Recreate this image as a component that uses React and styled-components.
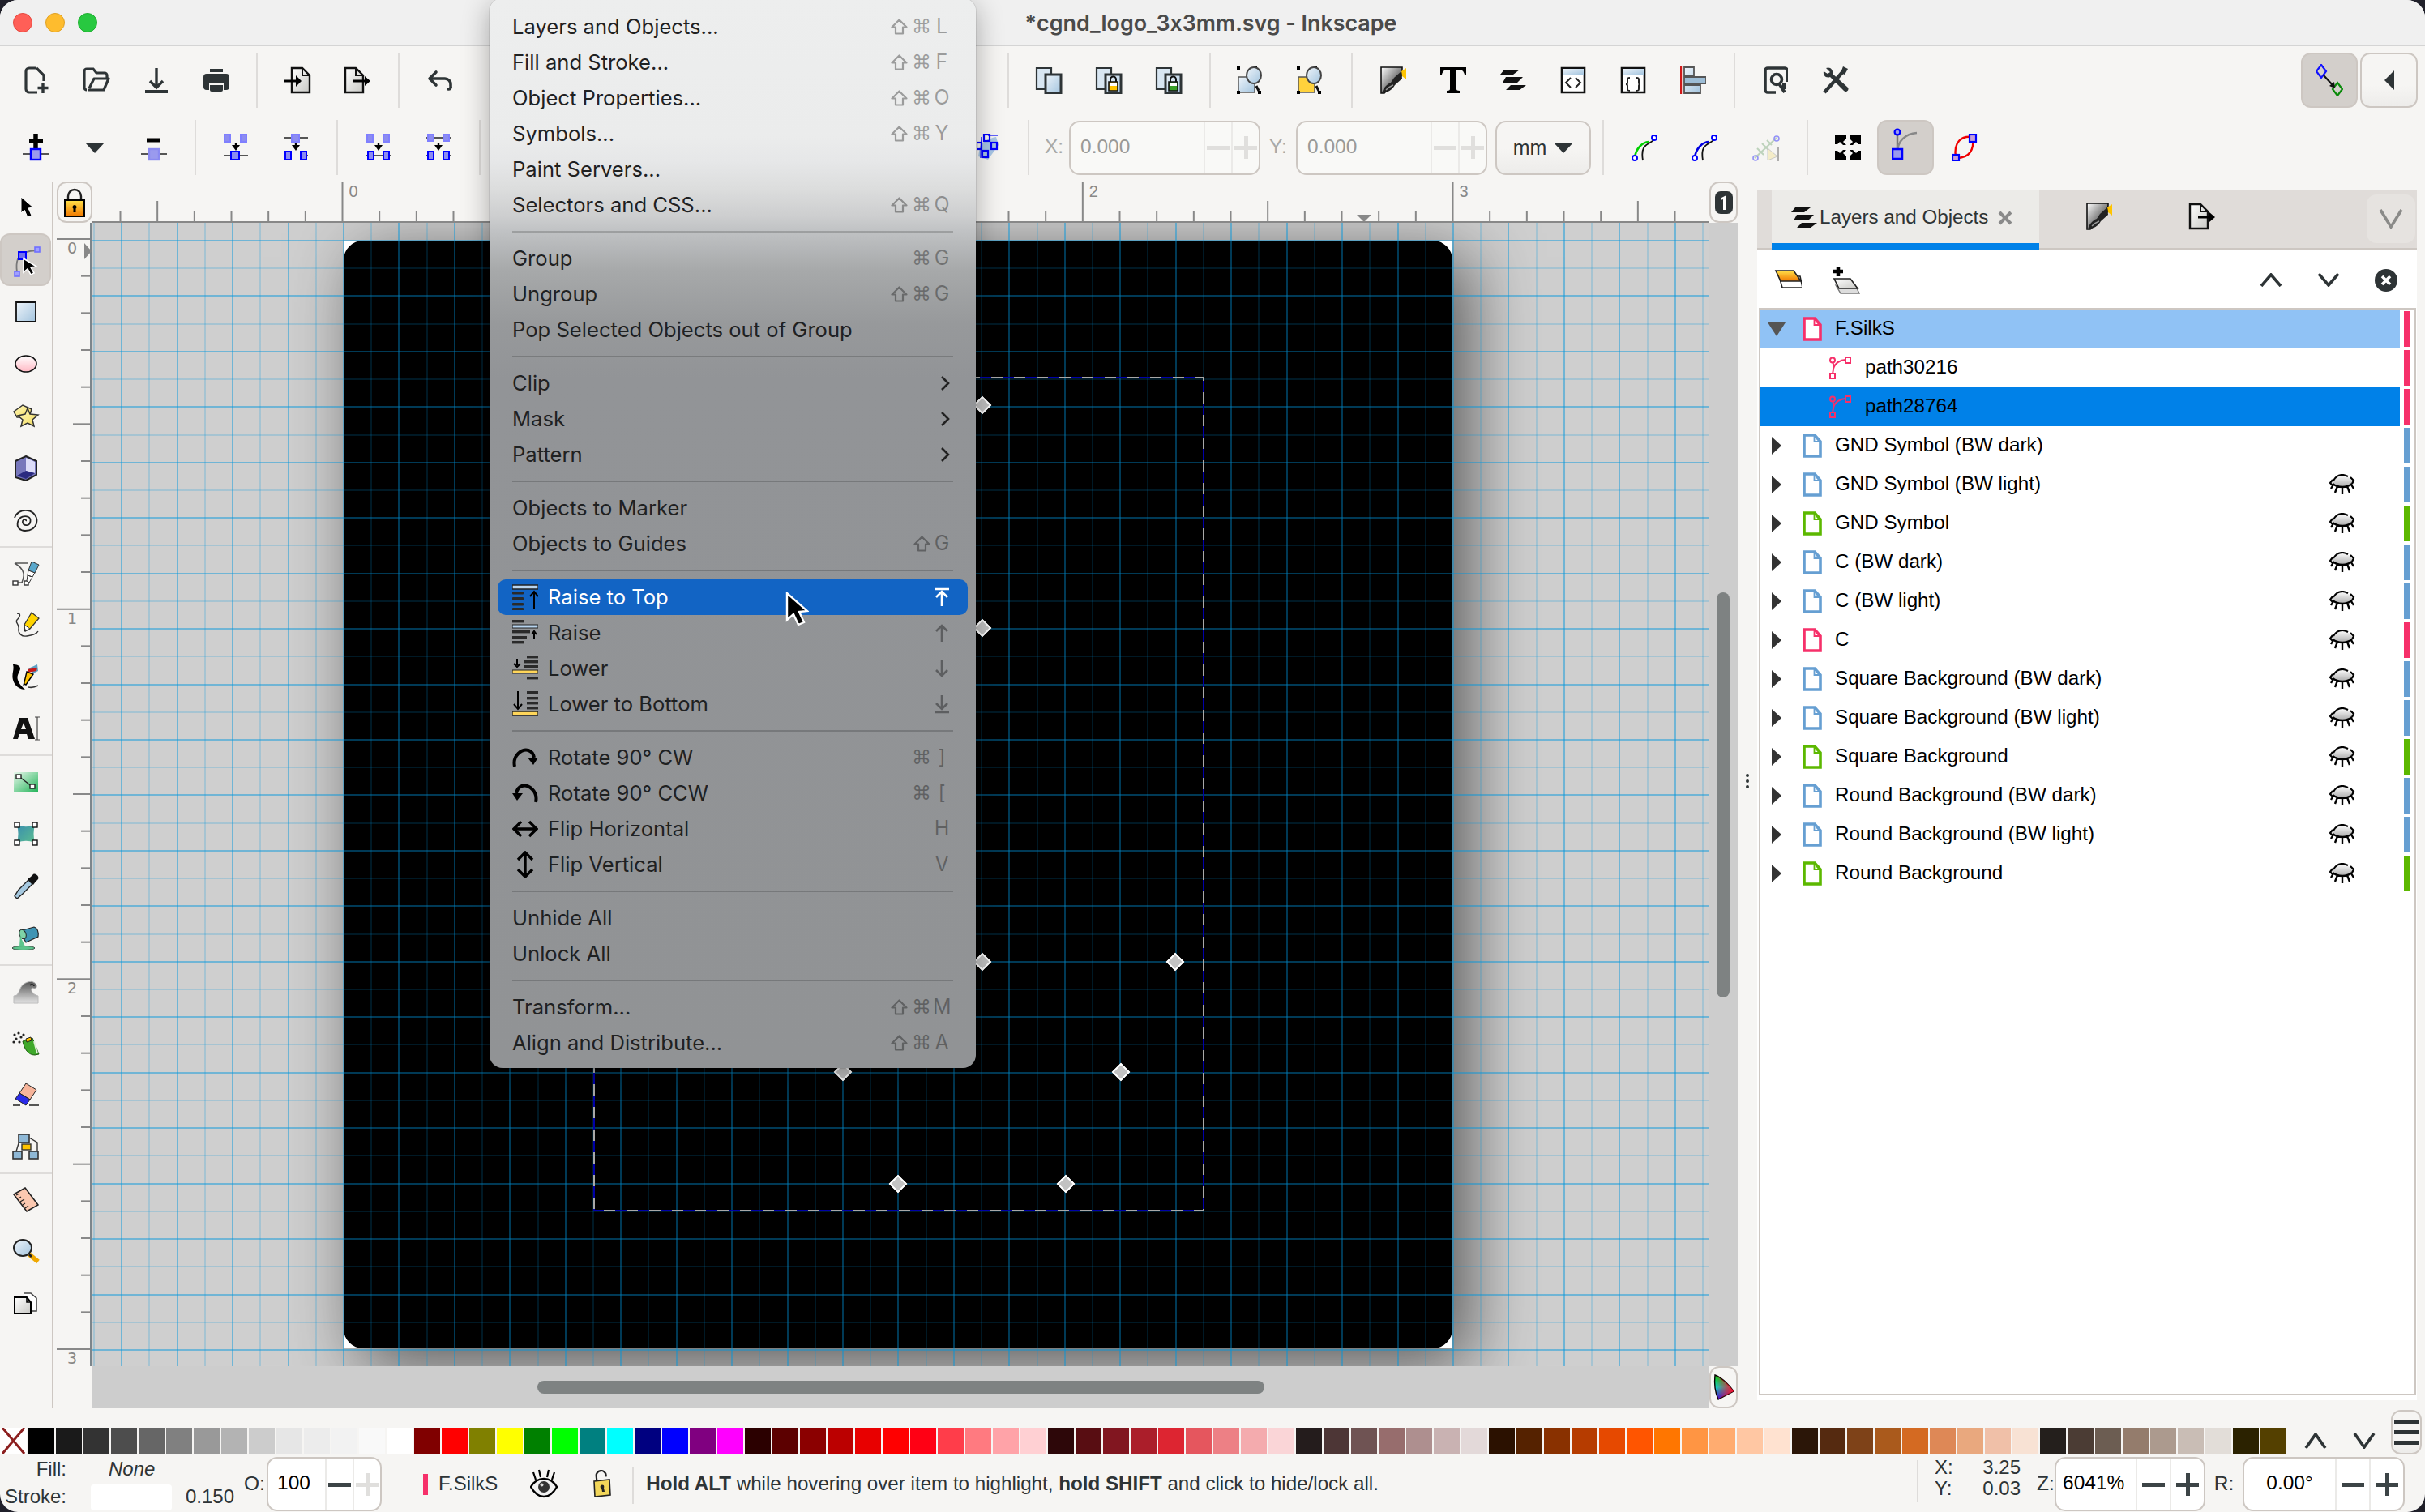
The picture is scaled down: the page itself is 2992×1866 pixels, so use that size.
import React from "react";
import styled, { createGlobalStyle } from "styled-components";

const GlobalStyle = createGlobalStyle`
  html, body {
    margin: 0;
    padding: 0;
    background: #20202a;
  }
  body {
    width: 2992px;
    height: 1866px;
    overflow: hidden;
    font-family: "Liberation Sans", Arial, sans-serif;
  }
  * { box-sizing: border-box; }
`;

const gridLines = (dir, phase, color, period = 68.45) =>
  `repeating-linear-gradient(${dir}, transparent 0 ${phase}px, ${color} ${phase}px ${phase + 2}px, transparent ${phase + 2}px ${period}px)`;

const Window = styled.div`
  position: relative;
  width: 2992px;
  height: 1866px;
  background: #f6f5f3;
  border-radius: 22px;
  overflow: hidden;
  display: flex;
  flex-direction: column;
`;

const TitleBar = styled.div`
  height: 57px;
  flex: none;
  background: #f0f0f0;
  border-bottom: 2px solid #d4d4d4;
  display: flex;
  align-items: center;
  padding-left: 16px;
  gap: 16px;
  position: relative;
`;

const Light = styled.span`
  width: 24px;
  height: 24px;
  border-radius: 50%;
  background: ${(p) => p.$color};
  border: 1px solid ${(p) => p.$edge};
`;

const TitleText = styled.div`
  flex: 1;
  text-align: center;
  margin-left: -140px;
  font-family: Inter, sans-serif;
  font-feature-settings: "calt" 0;
  font-weight: 600;
  font-size: 26.85px;
  color: #4a4a4a;
`;

const Toolbar = styled.div`
  height: ${(p) => p.$h}px;
  flex: none;
  display: flex;
  align-items: center;
  padding-left: ${(p) => p.$pl}px;
  padding-right: 9px;
`;

const ToolBtn = styled.div`
  width: ${(p) => p.$w || 74}px;
  height: 68px;
  flex: none;
  display: flex;
  align-items: center;
  justify-content: center;
  border-radius: 12px;
  background: ${(p) => (p.$on ? "#d3cfcb" : "transparent")};
  border: ${(p) => (p.$on ? "2px solid #cdc7c2" : "none")};
`;

const RaisedBtn = styled(ToolBtn)`
  background: linear-gradient(#f6f5f3 60%, #edecea);
  border: 2px solid #cdc7c2;
  margin-left: 3px;
`;

const SepBlock = styled.div`
  width: ${(p) => p.$w || 28}px;
  height: 68px;
  flex: none;
  display: flex;
  justify-content: center;
  &::after {
    content: "";
    width: 2px;
    background: #dedcda;
  }
`;

const Gap = styled.div`
  width: ${(p) => p.$w}px;
  flex: none;
`;

const Push = styled.div`
  flex: 1;
`;

const SpinLabel = styled.span`
  flex: none;
  width: ${(p) => p.$w}px;
  text-align: center;
  font-size: 24.5px;
  padding-bottom: 2px;
  color: ${(p) => (p.$dim ? "#a9a9a7" : "#2e3436")};
`;

const Spin = styled.div`
  width: ${(p) => p.$w}px;
  height: 67px;
  flex: none;
  display: flex;
  align-items: stretch;
  background: ${(p) => (p.$dim ? "#f9f9f7" : "#fff")};
  border: 2px solid #cdc7c2;
  border-radius: 13px;
  overflow: hidden;
`;

const SpinValue = styled.div`
  flex: 1;
  display: flex;
  align-items: center;
  justify-content: ${(p) => p.$align || "flex-start"};
  padding-left: ${(p) => p.$pl || 0}px;
  padding-bottom: 3px;
  font-size: 24.5px;
  color: ${(p) => (p.$dim ? "#9a9a98" : "#000")};
`;

const Stepper = styled.div`
  width: ${(p) => p.$w || 34}px;
  flex: none;
  position: relative;
  border-left: 2px solid #ebeae8;
  &::before {
    content: "";
    position: absolute;
    left: 50%;
    top: 50%;
    width: 28px;
    height: 5px;
    margin: -2px 0 0 -14px;
    background: ${(p) => p.$color};
  }
  &::after {
    content: "";
    position: absolute;
    left: 50%;
    top: 50%;
    width: 5px;
    height: 28px;
    margin: -14px 0 0 -2px;
    background: ${(p) => (p.$plus ? p.$color : "transparent")};
  }
`;

const UnitBtn = styled.div`
  width: 118px;
  height: 67px;
  flex: none;
  margin-left: 10px;
  border: 2px solid #cdc7c2;
  border-radius: 13px;
  background: linear-gradient(#f6f5f3 50%, #edecea);
  display: flex;
  align-items: center;
  justify-content: center;
  gap: 9px;
  font-size: 25px;
  color: #2e3436;
`;

const Workspace = styled.div`
  height: 1514px;
  flex: none;
  display: flex;
  align-items: flex-start;
`;

const ToolColumn = styled.div`
  width: 66px;
  height: 1514px;
  flex: none;
  border-right: 2px solid #cdc7c2;
  display: flex;
  flex-direction: column;
`;

const ToolItem = styled.div`
  height: ${(p) => p.$h}px;
  flex: none;
  display: flex;
  align-items: center;
  justify-content: center;
  border-radius: 12px;
  margin-right: 1px;
  background: ${(p) => (p.$on ? "#d3cfcb" : "transparent")};
  border: ${(p) => (p.$on ? "2px solid #cdc7c2" : "none")};
`;

const ToolSep = styled.div`
  height: 2px;
  flex: none;
  background: #dedcda;
`;

const CanvasArea = styled.div`
  width: 2078px;
  height: 1514px;
  flex: none;
  display: grid;
  grid-template-columns: 48px 1995px 35px;
  grid-template-rows: 51px 1411px 52px;
`;

const LockBtn = styled.div`
  margin-left: 4px;
  border: 2px solid #cdc7c2;
  border-radius: 12px;
  display: flex;
  align-items: center;
  justify-content: center;
  background: #f6f5f3;
`;

const DeskBtn = styled.div`
  background: #f6f5f3;
  border: 2px solid #cdc7c2;
  border-radius: 12px;
  display: flex;
  align-items: center;
  justify-content: center;
`;

const RulerSvg = styled.svg`
  display: block;
  overflow: visible;
`;

const Canvas = styled.div`
  position: relative;
  overflow: hidden;
  background: #cfcfcf;
`;

const Page = styled.div`
  position: absolute;
  left: 310px;
  top: 22px;
  width: 1368px;
  height: 1367px;
  background: #fff;
  box-shadow: 20px 20px 80px rgba(0, 0, 0, 0.58);
  &::before {
    content: "";
    position: absolute;
    inset: 0;
    border-radius: 24px;
    background: #000;
  }
`;

const Grid = styled.div`
  position: absolute;
  inset: 0;
  background-image:
    ${gridLines("90deg", 35.2, "rgba(0,150,220,.46)")},
    ${gridLines("90deg", 0.95, "rgba(0,150,220,.2)")},
    ${gridLines("180deg", 21, "rgba(0,150,220,.46)")},
    ${gridLines("180deg", 55.2, "rgba(0,150,220,.2)")};
`;

const PageDim = styled.div`
  position: absolute;
  left: 310px;
  top: 22px;
  width: 1368px;
  height: 1367px;
  border-radius: 24px;
  background: rgba(0, 0, 0, 0.15);
`;

const Selection = styled.svg`
  position: absolute;
  left: 618px;
  top: 190px;
`;

const Node = styled.span`
  position: absolute;
  left: ${(p) => p.$x - 114 - 8}px;
  top: ${(p) => p.$y - 275 - 8}px;
  width: 16px;
  height: 16px;
  background: #c2c2c2;
  border: 2px solid #fff;
  transform: rotate(45deg);
`;

const VScrollTrack = styled.div`
  background: #cdcdcd;
  padding: 456px 10px 0 9px;
`;

const VThumb = styled.div`
  width: 16px;
  height: 500px;
  border-radius: 8px;
  background: #7e8282;
`;

const HScrollTrack = styled.div`
  background: #cdcdcd;
  padding: 18px 0 0 549px;
`;

const HThumb = styled.div`
  width: 897px;
  height: 16px;
  border-radius: 8px;
  background: #7e8282;
`;

const RulerFoot = styled.div`
  border-right: 0;
`;

const Handle = styled.div`
  width: 24px;
  height: 1504px;
  flex: none;
  display: flex;
  flex-direction: column;
  align-items: center;
  justify-content: center;
  gap: 3px;
  padding-bottom: 24px;
`;

const HandleDot = styled.span`
  width: 4px;
  height: 4px;
  border-radius: 50%;
  background: #2e3436;
  margin-left: -1px;
`;

const Panel = styled.div`
  width: 814px;
  height: 1494px;
  margin-top: 10px;
  flex: none;
  background: #fff;
  display: flex;
  flex-direction: column;
`;

const TabBar = styled.div`
  height: 74px;
  flex: none;
  background: #e0dcd9;
  border-bottom: 2px solid #cdc7c2;
  display: flex;
  padding-left: 18px;
  position: relative;
`;

const ActiveTab = styled.div`
  width: 330px;
  height: 74px;
  flex: none;
  background: #ecebe8;
  border-bottom: 8px solid #0081e8;
  display: flex;
  align-items: center;
  font-size: 24.2px;
  color: #2e3436;
  padding: 4px 0 0 24px;
`;

const TabLabel = styled.span`
  margin-left: 3px;
  padding-bottom: 2px;
`;

const TabIcon = styled.div`
  margin-left: ${(p) => p.$ml}px;
  height: 66px;
  display: flex;
  align-items: center;
`;

const TabClose = styled.span`
  margin-left: 12px;
  display: flex;
`;

const TabMenuBtn = styled.div`
  position: absolute;
  right: 2px;
  top: 6px;
  width: 60px;
  height: 60px;
  border-radius: 12px;
  background: #e6e3e0;
  display: flex;
  align-items: center;
  justify-content: center;
`;

const PanelBar = styled.div`
  height: 72px;
  flex: none;
  display: flex;
  align-items: center;
  padding: 3px 24px 0 21px;
  gap: 38px;
`;

const PanelActions = styled.div`
  margin-left: auto;
  display: flex;
  align-items: center;
  gap: 43px;
`;

const LayerBox = styled.div`
  flex: none;
  height: 1342px;
  margin: 0 1px 0 2px;
  border: 2px solid #cdc7c2;
  display: flex;
  flex-direction: column;
`;

const LayerRow = styled.div`
  height: 48px;
  flex: none;
  display: flex;
  align-items: stretch;
`;

const LayerMain = styled.div`
  width: 789px;
  flex: none;
  display: flex;
  align-items: center;
  padding-right: 55px;
  background: ${(p) => p.$bg || "transparent"};
  font-size: 24.2px;
  color: #000;
`;

const Expander = styled.span`
  width: 40px;
  flex: none;
  display: flex;
  justify-content: center;
`;

const LayerIconWrap = styled.span`
  width: ${(p) => p.$w}px;
  margin: 0 ${(p) => p.$mr}px 0 ${(p) => p.$ml}px;
  flex: none;
  display: flex;
`;

const LayerName = styled.span`
  flex: 1;
  white-space: nowrap;
  padding-bottom: 3px;
`;

const LayerBar = styled.span`
  width: 8px;
  flex: none;
  margin: 2px 0 2px 5px;
  background: ${(p) => p.$color};
`;

const PaletteRow = styled.div`
  height: 56px;
  flex: none;
  display: flex;
  align-items: flex-end;
  position: relative;
`;

const Swatches = styled.div`
  display: flex;
  gap: 2px;
  height: 32px;
`;

const Swatch = styled.span`
  width: 32px;
  flex: none;
  background: ${(p) => p.$c};
`;

const NoSwatch = styled.span`
  width: 33px;
  flex: none;
  background: #fff;
  display: flex;
`;

const PaletteArrows = styled.div`
  width: 129px;
  height: 32px;
  flex: none;
  display: flex;
  align-items: center;
  justify-content: space-between;
  padding: 0 19px 0 22px;
`;

const MenuBtn = styled.div`
  width: 38px;
  height: 55px;
  flex: none;
  border: 2px solid #cdc7c2;
  border-radius: 12px;
  background: linear-gradient(#f6f5f3 70%, #ecebe9);
  display: flex;
  flex-direction: column;
  align-items: center;
  justify-content: center;
  gap: 8px;
  margin-bottom: -1px;
`;

const MenuBar = styled.span`
  width: 30px;
  height: 5px;
  background: #2e3436;
`;

const StatusBar = styled.div`
  flex: 1;
  display: flex;
  align-items: flex-start;
  padding-top: 4px;
  font-size: 24px;
  color: #2e3436;
`;

const FillGrid = styled.div`
  width: 299px;
  flex: none;
  display: grid;
  grid-template-columns: 82px 30px 100px 17px auto;
  grid-template-rows: 34px 34px;
  align-items: center;
  margin-top: -2px;
`;

const FillLabel = styled.span`
  text-align: right;
`;

const NoneText = styled.span`
  grid-column: 2 / 6;
  padding-left: 52px;
  font-style: italic;
`;

const StrokeSwatch = styled.span`
  height: 32px;
  margin-top: 2px;
  background: #fff;
  border-radius: 4px;
`;

const StatusOpacity = styled.div`
  display: flex;
  align-items: center;
  height: 67px;
`;

const LayerTag = styled.div`
  display: flex;
  align-items: center;
  height: 67px;
  margin-left: 51px;
  padding-bottom: 2px;
`;

const LayerDot = styled.span`
  width: 6px;
  height: 26px;
  background: #f6306a;
  margin: 2px 13px 0 0;
`;

const StatusIcon = styled.span`
  display: flex;
  margin-left: ${(p) => p.$ml}px;
`;

const StatusSep = styled.span`
  width: 2px;
  height: ${(p) => p.$h}px;
  flex: none;
  background: #dedcda;
  margin: ${(p) => p.$mt}px ${(p) => p.$mr}px 0 ${(p) => p.$ml}px;
`;

const Hint = styled.div`
  width: 1000px;
  flex: none;
  height: 67px;
  display: flex;
  align-items: center;
  padding-bottom: 2px;
  white-space: pre;
  font-size: 24.16px;
`;

const Coords = styled.div`
  display: grid;
  grid-template-columns: 60px 46px;
  grid-template-rows: 26px 26px;
  align-items: center;
  margin-right: 20px;
  line-height: 26px;
`;

const CoordValue = styled.span`
  text-align: right;
  white-space: nowrap;
  direction: rtl;
`;

const Menu = styled.div`
  position: absolute;
  left: 604px;
  top: -2px;
  width: 600px;
  height: 1320px;
  padding: 13px 0 9px;
  border-radius: 16px;
  background: linear-gradient(
    #edeeee 0,
    #ebecec 170px,
    #e6e7e8 202px,
    #dcdddd 235px,
    #cdcecf 269px,
    #c0c2c4 287px,
    #a7a9aa 335px,
    #97999b 402px,
    #929497 469px,
    #919395 100%
  );
  box-shadow: 0 8px 34px rgba(0, 0, 0, 0.32), 0 0 0 1px rgba(0, 0, 0, 0.08);
  font-family: Inter, sans-serif;
  font-size: 25.6px;
  color: #1f2122;
  z-index: 5;
`;

const MenuRow = styled.div`
  height: 44px;
  margin: 0 10px;
  padding: 0 21px 0 18px;
  display: flex;
  align-items: center;
  border-radius: 10px;
  background: ${(p) => (p.$active ? "#1264c4" : "transparent")};
  color: ${(p) => (p.$active ? "#fff" : "inherit")};
`;

const MenuIcon = styled.span`
  width: 32px;
  margin-right: 12px;
  flex: none;
  display: flex;
  color: #111;
`;

const MenuText = styled.span`
  flex: 1;
  white-space: nowrap;
  padding-bottom: 2px;
`;

const Keys = styled.span`
  display: flex;
  align-items: center;
  color: rgba(0, 0, 0, 0.34);
  font-size: 25px;
`;

const KeyCap = styled.span`
  width: ${(p) => p.$w}px;
  display: flex;
  justify-content: center;
  text-align: center;
  font-family: "DejaVu Sans", sans-serif;
  font-size: 24px;
`;

const KeyLetter = styled.span`
  width: 22px;
  text-align: center;
  padding-bottom: 2px;
`;

const MenuSep = styled.div`
  height: 22px;
  margin: 0 28px;
  display: flex;
  align-items: center;
  &::after {
    content: "";
    flex: 1;
    height: 2px;
    background: rgba(0, 0, 0, 0.18);
  }
`;

const Pointer = styled.svg`
  position: absolute;
  left: 968px;
  top: 730px;
  z-index: 6;
`;

/* shared gradients for the colour icons */
const Defs = () => (
  <svg width="0" height="0" style={{ position: "absolute" }}>
    <defs>
      <linearGradient id="gDoc" x1="0" y1="0" x2="1" y2="1">
        <stop offset="0" stopColor="#fff" />
        <stop offset="1" stopColor="#c8c8c4" />
      </linearGradient>
      <linearGradient id="gBlue" x1="0" y1="0" x2="1" y2="1">
        <stop offset="0" stopColor="#eef4fa" />
        <stop offset="1" stopColor="#a3c4de" />
      </linearGradient>
      <linearGradient id="gPink" x1="0" y1="0" x2="0" y2="1">
        <stop offset="0" stopColor="#fff" />
        <stop offset="1" stopColor="#ffb9c4" />
      </linearGradient>
      <linearGradient id="gYellow" x1="0" y1="0" x2="1" y2="1">
        <stop offset="0" stopColor="#fff8c0" />
        <stop offset="1" stopColor="#f3dc5a" />
      </linearGradient>
      <linearGradient id="gGold" x1="0" y1="0" x2="0" y2="1">
        <stop offset="0" stopColor="#ffe14a" />
        <stop offset="1" stopColor="#f07800" />
      </linearGradient>
      <linearGradient id="gGreen" x1="0" y1="0" x2="1" y2="1">
        <stop offset="0" stopColor="#e9f8ec" />
        <stop offset="1" stopColor="#25b45a" />
      </linearGradient>
      <linearGradient id="gTeal" x1="0" y1="0" x2="1" y2="1">
        <stop offset="0" stopColor="#3a8fae" />
        <stop offset="1" stopColor="#5bbd90" />
      </linearGradient>
      <linearGradient id="gBrush" x1="0" y1="0" x2="1" y2="1">
        <stop offset="0" stopColor="#fff" />
        <stop offset="1" stopColor="#111" />
      </linearGradient>
      <linearGradient id="gWave" x1="0" y1="0" x2="0" y2="1">
        <stop offset="0" stopColor="#555" />
        <stop offset="1" stopColor="#e4e4e4" />
      </linearGradient>
      <linearGradient id="gEye" x1="0" y1="0" x2="0" y2="1">
        <stop offset="0" stopColor="#fff" />
        <stop offset="1" stopColor="#aaa" />
      </linearGradient>
      <linearGradient id="gWheelV" x1="0" y1="0" x2="0" y2="1">
        <stop offset="0" stopColor="#00d000" />
        <stop offset="0.5" stopColor="#00e0d0" />
        <stop offset="1" stopColor="#2000ff" />
      </linearGradient>
      <linearGradient id="gWheelH" x1="0" y1="0" x2="1" y2="0">
        <stop offset="0" stopColor="#ff0000" stopOpacity="0" />
        <stop offset="1" stopColor="#ff1030" />
      </linearGradient>
    </defs>
  </svg>
);

const Ic = ({ w = 36, h = 36, vb, children }) => (
  <svg width={w} height={h} viewBox={vb || `0 0 ${w} ${h}`} fill="none">
    {children}
  </svg>
);

const INK = "#2e3436";
const NODE = "#0000ff";
const SOFT = "#7f7fff";

const NewIcon = () => (
  <Ic w={32} h={34}>
    <path d="M16 2H7a4 4 0 0 0-4 4v22a4 4 0 0 0 4 4h10M16 2l9 9v7" stroke={INK} strokeWidth="3.2" strokeLinejoin="round" />
    <path d="M24 20v13M17.5 26.5h13" stroke={INK} strokeWidth="3.4" />
  </Ic>
);
const OpenIcon = () => (
  <Ic w={34} h={32}>
    <path d="M5 28a3 3 0 0 1-3-3V5a3 3 0 0 1 3-3h8l4 5h10a3 3 0 0 1 3 3v3" stroke={INK} strokeWidth="3.2" />
    <path d="M6 28h20l6-14H14L8 26" stroke={INK} strokeWidth="3.2" strokeLinejoin="round" />
  </Ic>
);
const SaveIcon = () => (
  <Ic w={30} h={34}>
    <path d="M15 2v24M7 18l8 8 8-8" stroke={INK} strokeWidth="3.4" />
    <path d="M1 31h28" stroke={INK} strokeWidth="4" />
  </Ic>
);
const PrintIcon = () => (
  <Ic w={34} h={30}>
    <path d="M9 1h16v4H9zM5 7h24a4 4 0 0 1 4 4v12a4 4 0 0 1-4 4h-3v-8H8v8H5a4 4 0 0 1-4-4V11a4 4 0 0 1 4-4z" fill={INK} />
    <path d="M9 21h16v6a2 2 0 0 1-2 2H11a2 2 0 0 1-2-2z" fill={INK} />
  </Ic>
);
const ImportIcon = () => (
  <Ic w={34} h={34}>
    <path d="M10 2h13l9 9v21H10z" fill="url(#gDoc)" stroke="#111" strokeWidth="2.4" />
    <path d="M23 2v9h9" stroke="#111" strokeWidth="2" />
    <path d="M0 18h16" stroke="#000" strokeWidth="3" />
    <path d="M15 11l7 7-7 7z" fill="#000" />
  </Ic>
);
const ExportIcon = () => (
  <Ic w={34} h={34}>
    <path d="M2 2h13l9 9v21H2z" fill="url(#gDoc)" stroke="#111" strokeWidth="2.4" />
    <path d="M15 2v9h9" stroke="#111" strokeWidth="2" />
    <path d="M12 18h16" stroke="#000" strokeWidth="3" />
    <path d="M26 12l7 6-7 6z" fill="#000" />
  </Ic>
);
const UndoIcon = () => (
  <Ic w={32} h={26}>
    <path d="M11 3L3 11l8 8" stroke={INK} strokeWidth="3.6" strokeLinecap="round" strokeLinejoin="round" />
    <path d="M4 11h18a7 7 0 0 1 7 7v2a3 3 0 0 1-3 4" stroke={INK} strokeWidth="3.6" strokeLinecap="round" />
  </Ic>
);
const DuplicateIcon = ({ lock }) => (
  <Ic w={34} h={34}>
    <path d="M2 2h18v26H2z" fill="#d8e6f2" stroke={INK} strokeWidth="2.2" />
    <path d="M13 10h19v23H13z" fill="url(#gBlue)" stroke={INK} strokeWidth="3" />
    {lock === "gold" && <path d="M17 19h11v11H17z" fill="#ffc400" stroke="#111" strokeWidth="1.6" />}
    {lock === "green" && <path d="M17 19h11v11H17z" fill="#3aa02a" stroke="#111" strokeWidth="1.6" />}
    {lock && <path d="M19 19v-3a3.5 3.5 0 0 1 7 0v3" stroke="#111" strokeWidth="2" />}
    {lock && <path d="M18 20h9v4h-9z" fill="#fff" />}
  </Ic>
);
const ZoomSelIcon = ({ gold }) => (
  <Ic w={34} h={34}>
    <path d="M2 13h20v19H2z" fill={gold ? "#ffd23c" : "url(#gBlue)"} stroke="#555" strokeWidth="1.5" />
    <path d="M0 0h4v4H0zM26 30h4v4h-4zM0 30h4v4H0zM21 0h4v4h-4z" fill="#000" />
    <ellipse cx="21" cy="11" rx="9" ry="10" fill="url(#gBlue)" stroke="#444" strokeWidth="2" />
    <path d="M24 24l3 6" stroke="#111" strokeWidth="3" />
  </Ic>
);
const BrushIcon = () => (
  <Ic w={34} h={34}>
    <path d="M2 1h26v2L27 12 6 33H2z" fill="url(#gBrush)" stroke="#111" strokeWidth="1.6" />
    <path d="M27 6l6-4v14l-5-4z" fill="#ffc400" />
    <path d="M3 33c2-7 6-11 11-13l4-6 9-8 1 9-9 8c-3 6-9 9-16 10z" fill="#222" />
    <path d="M8 29c3-3 6-5 9-6" stroke="#999" strokeWidth="1.4" />
  </Ic>
);
const BigTIcon = () => (
  <Ic w={34} h={34}>
    <path d="M1 1h32v9h-2c-1-4-3-6-7-6h-3v24c0 1 1 2 4 2v3H9v-3c3 0 4-1 4-2V4h-3C6 4 4 6 3 10H1z" fill="#000" />
  </Ic>
);
const LayersIcon = () => (
  <Ic w={32} h={26}>
    <path d="M5 0h19l-8 6H0zM7 9h21l-7 7H3zM13 19h19l-8 6H7z" fill="#111" />
  </Ic>
);
const XmlIcon = ({ braces }) => (
  <Ic w={32} h={34}>
    <path d="M2 2h28v30H2z" fill="#fff" stroke="#111" strokeWidth="2.6" />
    <path d="M3 3h26v7H3z" fill="url(#gBlue)" />
    {!braces && <path d="M13 16l-6 6 6 6M19 16l6 6-6 6" stroke="#222" strokeWidth="2" transform="translate(0 -2)" />}
    {braces && (
      <path d="M12 14c-3 0-3 1-3 3v3c0 2-1 2-2 2 1 0 2 0 2 2v3c0 2 0 3 3 3M20 14c3 0 3 1 3 3v3c0 2 1 2 2 2-1 0-2 0-2 2v3c0 2 0 3-3 3" stroke="#222" strokeWidth="2" />
    )}
  </Ic>
);
const AlignIcon = () => (
  <Ic w={32} h={34}>
    <path d="M1 0v34" stroke="#d01818" strokeWidth="2.4" />
    <path d="M5 1h12v10H5zM5 23h20v10H5z" fill="url(#gBlue)" stroke="#555" strokeWidth="1.8" />
    <path d="M5 13h27v8H5z" fill="#9dbdd6" stroke="#555" strokeWidth="1.8" />
  </Ic>
);
const PrefsDocIcon = () => (
  <Ic w={30} h={34}>
    <path d="M14 2H5a3 3 0 0 0-3 3v24a3 3 0 0 0 3 3h10M14 2l12 0a3 3 0 0 1 3 3v14" stroke={INK} strokeWidth="3.6" />
    <circle cx="16" cy="16" r="6.5" stroke={INK} strokeWidth="3.6" />
    <path d="M19 21l7 11" stroke={INK} strokeWidth="4" />
    <path d="M25 20v8" stroke={INK} strokeWidth="4" />
  </Ic>
);
const ToolsIcon = () => (
  <Ic w={34} h={34}>
    <path d="M3 32L28 4" stroke={INK} strokeWidth="4.4" />
    <path d="M26 0l6 3-4 7-5-2zM5 2c5-2 9 2 8 7l19 17c2 3-2 7-5 4L10 13c-5 2-9-2-8-7l5 3 3-2z" fill={INK} />
  </Ic>
);
const SnapIcon = () => (
  <Ic w={34} h={40}>
    <path d="M7 1l6 8-6 8-6-8z" stroke="#1010ff" strokeWidth="2.2" />
    <path d="M27 25l6 8-6 8-6-8z" stroke="#0a8a0a" strokeWidth="2.2" transform="translate(0 -2)" />
    <path d="M10 14l12 13" stroke="#111" strokeWidth="2.2" />
    <path d="M24 30l-7-3 6-5z" fill="#111" />
  </Ic>
);
const Tri = ({ dir = "left", c = INK, w = 12, h = 24 }) => {
  const d = { left: `M${w} 0V${h}L0 ${h / 2}z`, right: `M0 0V${h}L${w} ${h / 2}z`, down: `M0 0H${w}L${w / 2} ${h}z` }[dir];
  return (
    <svg width={w} height={h}>
      <path d={d} fill={c} />
    </svg>
  );
};
const Chev = ({ up, c = INK, w = 28, h = 17, sw = 3.6 }) => (
  <svg width={w} height={h} viewBox={`0 0 ${w} ${h}`} fill="none">
    <path d={up ? `M2 ${h - 1}L${w / 2} 2L${w - 2} ${h - 1}` : `M2 1L${w / 2} ${h - 2}L${w - 2} 1`} stroke={c} strokeWidth={sw} />
  </svg>
);
const Sq = ({ x, y, w = 8, h = 8, c = NODE, sw = 2 }) => (
  <rect x={x} y={y} width={w} height={h} fill="#8c8cf0" stroke={c} strokeWidth={sw} />
);

const AddNodeIcon = ({ minus }) => (
  <Ic w={34} h={34}>
    {!minus && <path d="M17 0v18M9 9h17" stroke="#000" strokeWidth="5.5" />}
    {minus && <path d="M8 8h16" stroke="#000" strokeWidth="5" />}
    <path d="M1 25h32" stroke="#555" strokeWidth="2" />
    <rect x="11" y="19" width="12" height="13" fill="#9a9aee" stroke={minus ? "#8a8af0" : NODE} strokeWidth="2.4" />
  </Ic>
);
const JoinIcon = ({ kind }) => (
  <Ic w={32} h={34}>
    {kind === "join" && (
      <>
        <Sq x={2} y={1} h={9} w={7} c={SOFT} />
        <Sq x={22} y={1} h={9} w={7} c={SOFT} />
        <path d="M1 27h30" stroke="#555" strokeWidth="2" />
        <Sq x={10} y={22} h={10} w={10} />
      </>
    )}
    {kind === "break" && (
      <>
        <path d="M1 5h30" stroke="#555" strokeWidth="2" />
        <Sq x={11} y={1} h={9} w={9} c={SOFT} />
        <path d="M1 27h9M22 27h9" stroke="#555" strokeWidth="2" />
        <Sq x={3} y={22} h={10} w={7} />
        <Sq x={22} y={22} h={10} w={7} />
      </>
    )}
    {kind === "seg" && (
      <>
        <Sq x={2} y={1} h={9} w={7} c={SOFT} />
        <Sq x={22} y={1} h={9} w={7} c={SOFT} />
        <path d="M1 27h30" stroke="#555" strokeWidth="2" />
        <Sq x={3} y={22} h={10} w={7} />
        <Sq x={22} y={22} h={10} w={7} />
      </>
    )}
    {kind === "del" && (
      <>
        <path d="M1 5h30" stroke="#555" strokeWidth="2" />
        <Sq x={3} y={1} h={8} w={7} c={SOFT} />
        <Sq x={22} y={1} h={8} w={7} c={SOFT} />
        <path d="M1 27h9M22 27h9" stroke="#555" strokeWidth="2" />
        <Sq x={3} y={22} h={10} w={7} />
        <Sq x={22} y={22} h={10} w={7} />
      </>
    )}
    <path d="M16 11v6" stroke="#000" strokeWidth="2.4" />
    <path d="M11 14h10l-5 7z" fill="#000" />
  </Ic>
);
const NodeClusterIcon = () => (
  <Ic w={28} h={34}>
    <path d="M4 16c3-6 10-10 20-12L27 14 14 32 2 28z" fill="#a8c6e6" />
    <path d="M6 4L5 30M14 2h12" stroke="#3030ff" strokeWidth="1.6" />
    <rect x="9" y="1" width="7" height="8" fill="none" stroke={NODE} strokeWidth="2.2" />
    <rect x="0" y="11" width="6" height="8" fill="none" stroke={NODE} strokeWidth="2.2" />
    <rect x="18" y="11" width="7" height="8" fill="none" stroke={NODE} strokeWidth="2.2" />
    <rect x="7" y="21" width="7" height="8" fill="none" stroke={NODE} strokeWidth="2.2" />
  </Ic>
);
const HandleIcon = ({ green }) => (
  <Ic w={34} h={34}>
    <path d="M4 30C5 18 14 10 22 10" stroke={green ? "#00d000" : "#0000e0"} strokeWidth="2.6" />
    <path d="M29 6C24 14 10 10 14 33" stroke="#111" strokeWidth="1.8" />
    <circle cx="28" cy="5" r="3" stroke={NODE} strokeWidth="2" fill="#fff" />
    <circle cx="4" cy="30" r="3" stroke={NODE} strokeWidth="2" fill="#fff" />
  </Ic>
);
const PatternIcon = () => (
  <Ic w={34} h={34}>
    <g opacity=".4">
      <path d="M3 30L30 5" stroke="#6aa06a" strokeWidth="2" />
      <path d="M6 18l8 8M12 12l8 8M18 8l6 6" stroke="#6aa06a" strokeWidth="2" />
      <circle cx="4" cy="30" r="3" stroke={NODE} strokeWidth="1.6" />
      <circle cx="30" cy="6" r="3" stroke={NODE} strokeWidth="1.6" />
      <path d="M19 18l12 10-12 5z" fill="#f3e08a" stroke="#888" />
      <path d="M32 16v18" stroke="#444" strokeWidth="2" />
    </g>
  </Ic>
);
const ExpandIcon = () => (
  <Ic w={32} h={32}>
    <path d="M0 0h14v5l-4 4 4 4h-4L6 9l-3 3H0zM32 0H18v5l4 4-4 4h4l4-4 3 3h3zM0 32h14v-5l-4-4 4-4h-4L6 23l-3-3H0zM32 32H18v-5l4-4-4-4h4l4 4 3-3h3z" fill="#000" />
  </Ic>
);
const CuspHandleIcon = () => (
  <Ic w={34} h={48}>
    <path d="M7 8v26" stroke="#777" strokeWidth="2.5" />
    <path d="M7 30c0-14 10-23 24-24" stroke="#888" strokeWidth="2.5" />
    <circle cx="7" cy="5" r="3.4" stroke={NODE} strokeWidth="2.2" fill="#9a9aee" />
    <rect x="1" y="26" width="12" height="12" fill="#9a9aee" stroke={NODE} strokeWidth="2.5" />
  </Ic>
);
const OutlineIcon = () => (
  <Ic w={32} h={34}>
    <path d="M5 30C2 10 12 2 26 4M6 30C22 30 28 20 26 4" stroke="#f00000" strokeWidth="2.4" />
    <rect x="22" y="1" width="8" height="9" fill="#c8a0d8" stroke={NODE} strokeWidth="2.2" />
    <rect x="1" y="26" width="8" height="8" fill="#c8a0d8" stroke={NODE} strokeWidth="2.2" />
  </Ic>
);

const SelectTool = () => (
  <Ic w={24} h={30}>
    <path d="M6 2v20l4-4 4 9 5-2-4-9 6-1z" fill="#000" stroke="#fff" strokeWidth="1" />
  </Ic>
);
const NodeTool = () => (
  <Ic w={44} h={48}>
    <path d="M11 40c-2-14 2-22 8-24 6-2 12-3 17-3" stroke="#777" strokeWidth="1.8" />
    <rect x="33" y="9" width="6" height="6" fill="#a0a0ff" stroke="#7070ff" strokeWidth="1.6" />
    <rect x="13" y="15" width="9" height="9" fill="#7070ee" stroke={NODE} strokeWidth="2" />
    <rect x="8" y="39" width="6" height="6" fill="#a0a0ff" stroke="#7070ff" strokeWidth="1.6" />
    <path d="M19 23l16 10-7 1 4 7-4 2-4-7-5 4z" fill="#000" stroke="#fff" strokeWidth="1.6" />
  </Ic>
);
const RectTool = () => (
  <Ic w={28} h={28}>
    <path d="M2 2h24v24H2z" fill="url(#gBlue)" stroke="#111" strokeWidth="1.8" />
  </Ic>
);
const EllipseTool = () => (
  <Ic w={30} h={24}>
    <ellipse cx="15" cy="12" rx="13" ry="10" fill="url(#gPink)" stroke="#111" strokeWidth="1.6" />
  </Ic>
);
const StarTool = () => (
  <Ic w={34} h={30}>
    <path d="M2 10L13 2l11 5-3 10H6z" fill="url(#gYellow)" stroke="#333" strokeWidth="1.5" />
    <path d="M19 6l3 7 10 1-7 6 2 8-8-4-8 4 2-8-6-5 9-2z" fill="url(#gYellow)" stroke="#333" strokeWidth="1.5" />
  </Ic>
);
const BoxTool = () => (
  <Ic w={30} h={32}>
    <path d="M15 1l13 6v17l-13 7-13-4V7z" fill="#7777bb" stroke="#222" strokeWidth="2" />
    <path d="M15 3l11 5v14l-11-3z" fill="#dcdcf8" />
    <path d="M15 19l11 3-11 7-11-4z" fill="#2a2a80" />
  </Ic>
);
const SpiralTool = () => (
  <Ic w={32} h={30}>
    <path d="M16 16c1-2-3-3-4 0s2 6 6 5 5-8 1-10-11-1-13 6 3 11 9 11 12-2 14-9S26 4 18 3 4 6 2 12" stroke="#222" strokeWidth="1.8" />
  </Ic>
);
const PenTool = () => (
  <Ic w={34} h={32}>
    <path d="M3 3h17M3 3c14 8 12 16 9 24M13 27H6" stroke="#555" strokeWidth="1.5" />
    <rect x="1" y="25" width="6" height="5" fill="#fff" stroke="#333" strokeWidth="1.4" />
    <rect x="15" y="25" width="5" height="5" fill="#fff" stroke="#333" strokeWidth="1.4" />
    <path d="M24 1l9 4-5 10-8-3z" fill="#5aa8cc" stroke="#333" />
    <path d="M20 12l8 3-3 5-6-2zM19 18l6 2-4 7-3-2z" fill="#fff" stroke="#333" />
  </Ic>
);
const PencilTool = () => (
  <Ic w={34} h={34}>
    <path d="M6 2c6 0 3 5 0 8s3 5 2 11 4 10 10 9 12-2 14-6" stroke="#333" strokeWidth="1.4" />
    <path d="M24 1l9 7-11 13-6 3-1-8z" fill="#ffd400" stroke="#333" strokeWidth="1.2" />
    <path d="M15 16l1 8 6-3z" fill="#fff" stroke="#333" />
    <path d="M15 24l1-3 1 2z" fill="#000" />
  </Ic>
);
const CalligraphyTool = () => (
  <Ic w={34} h={34}>
    <path d="M1 2c4 0 9 1 9 5s-5 8-3 14 7 10 9 12c-6 0-13-4-15-12S3 9 1 2z" fill="#000" />
    <path d="M20 7l11-5 1 8-6 3z" fill="#5fa0c4" />
    <path d="M19 8l12-2-1 4-11 2z" fill="#c81818" />
    <path d="M18 11l8 3-9 13-2-1-1 2z" fill="#ffc400" stroke="#000" strokeWidth="1.4" />
    <path d="M20 30c4 1 8 0 12-2" stroke="#333" strokeWidth="1.6" />
  </Ic>
);
const TextTool = () => (
  <Ic w={34} h={30}>
    <path d="M9 2h10l9 26h-8l-2-6H9l-2 6H1zM11 16h6l-3-8z" fill="#111" fillRule="evenodd" />
    <path d="M31 1v28M28 1h6M28 29h6" stroke="#444" strokeWidth="1.2" />
  </Ic>
);
const GradientTool = () => (
  <Ic w={32} h={26}>
    <path d="M1 1h30v24H1z" fill="url(#gGreen)" />
    <path d="M7 6l17 13" stroke="#222" strokeWidth="1.5" />
    <rect x="4" y="4" width="6" height="5" fill="#fff" stroke="#222" strokeWidth="1.4" />
    <rect x="21" y="16" width="6" height="5" fill="#fff" stroke="#222" strokeWidth="1.4" />
  </Ic>
);
const MeshTool = () => (
  <Ic w={30} h={30}>
    <path d="M4 4c8 3 14 3 22 0-2 8-2 14 0 22-8-3-14-3-22 0 2-8 2-14 0-22z" fill="url(#gTeal)" />
    {[[4, 4], [26, 4], [4, 26], [26, 26]].map(([x, y]) => (
      <rect key={x + "-" + y} x={x - 3} y={y - 3} width="6" height="6" fill="#fff" stroke="#111" strokeWidth="1.4" />
    ))}
  </Ic>
);
const DropperTool = () => (
  <Ic w={34} h={34}>
    <path d="M8 21l12-12 5 5-12 12-7 6-3-3z" fill="#a6c9e0" stroke="#222" strokeWidth="1.4" />
    <path d="M19 8l4-3 3-3c3-2 8 3 6 6l-3 3-3 4z" fill="#111" />
  </Ic>
);
const BucketTool = () => (
  <Ic w={34} h={30}>
    <path d="M9 6l18-5c4 1 6 6 5 12L17 20z" fill="#3f94b4" stroke="#222" strokeWidth="1.2" />
    <ellipse cx="13" cy="10" rx="4" ry="6" fill="#7fd3a8" stroke="#222" transform="rotate(-20 13 10)" />
    <path d="M10 10c1 6 4 10 6 15H9z" fill="#5cc58c" />
    <ellipse cx="14" cy="27" rx="14" ry="2.5" fill="#5cc58c" stroke="#333" strokeWidth=".8" />
  </Ic>
);
const TweakTool = () => (
  <Ic w={32} h={30}>
    <path d="M1 20c6 0 6-6 9-11S22 0 27 4s1 9-3 6c-3 1-1 8 7 10v9H1z" fill="url(#gWave)" stroke="#bbb" />
    <path d="M21 7c2-2 5-1 5 1" stroke="#222" strokeWidth="1.6" />
  </Ic>
);
const SprayTool = () => (
  <Ic w={34} h={30}>
    <path d="M13 12l12-4 8 20-5 1c-8 0-13-7-15-17z" fill="#3fa82a" stroke="#1c5a10" />
    <path d="M17 9l6-2 1 4-6 2z" fill="#ffc400" stroke="#222" />
    <path d="M27 12l4 15" stroke="#dff0d8" strokeWidth="2" />
    {[[3, 4], [8, 2], [11, 7], [5, 9], [2, 13], [9, 13], [14, 4]].map(([x, y]) => (
      <circle key={x + "-" + y} cx={x} cy={y} r="1.6" fill="#222" />
    ))}
  </Ic>
);
const EraserTool = () => (
  <Ic w={34} h={30}>
    <path d="M17 1l13 8-8 12-13-8z" fill="#f7b49a" stroke="#222" strokeWidth="1" />
    <path d="M9 13l13 8-5 7-13-8z" fill="#2a2ae8" stroke="#222" strokeWidth="1" />
    <path d="M1 28h9M21 28h12" stroke="#222" strokeWidth="1.4" />
  </Ic>
);
const ConnectorTool = () => (
  <Ic w={34} h={32}>
    <path d="M8 12L5 22M21 5l10 6v11" stroke="#333" strokeWidth="1.4" />
    <rect x="8" y="1" width="13" height="10" fill="#8eb8d6" stroke="#333" strokeWidth="1.6" />
    <rect x="12" y="13" width="11" height="7" fill="#ffc400" stroke="#333" strokeWidth="1.4" />
    <rect x="1" y="22" width="11" height="9" fill="#8eb8d6" stroke="#333" strokeWidth="1.6" />
    <rect x="21" y="22" width="11" height="9" fill="#8eb8d6" stroke="#333" strokeWidth="1.6" />
  </Ic>
);
const MeasureTool = () => (
  <Ic w={32} h={32}>
    <path d="M1 9L15 1l16 21-14 8z" fill="#fbc8b0" stroke="#222" strokeWidth="1.6" />
    <path d="M4 10l4-2M7 14l3-2M9 18l5-3M12 22l3-2M15 26l4-3" stroke="#222" strokeWidth="1.2" />
  </Ic>
);
const ZoomTool = () => (
  <Ic w={34} h={32}>
    <ellipse cx="13" cy="12" rx="11" ry="10" fill="url(#gBlue)" stroke="#222" strokeWidth="2" />
    <path d="M21 20l11 9" stroke="#f0a800" strokeWidth="5.5" />
    <path d="M21 20l3 3" stroke="#222" strokeWidth="3" />
  </Ic>
);
const PagesTool = () => (
  <Ic w={30} h={28}>
    <path d="M12 2h9l7 6v16H20" stroke="#444" strokeWidth="1.6" fill="#fff" />
    <path d="M1 7h15l5 6v14H1z" fill="url(#gDoc)" stroke="#000" strokeWidth="2" />
    <path d="M16 7v6h5" stroke="#000" strokeWidth="1.6" />
  </Ic>
);

const Padlock = () => (
  <Ic w={28} h={36}>
    <path d="M6 16V10a8 8 0 0 1 16 0v6" stroke="#222" strokeWidth="2.4" />
    <rect x="2" y="15" width="24" height="20" fill="url(#gGold)" stroke="#000" strokeWidth="2" />
    <path d="M14 21a2.5 2.5 0 0 1 1.5 4.5V30h-3v-4.500A2.500 2.500 0 0 1 14 21z" fill="#000" />
  </Ic>
);
const OpenLock = () => (
  <Ic w={24} h={34}>
    <path d="M6 14V7a6 6 0 0 1 12 0v2" stroke="#222" strokeWidth="2.2" transform="rotate(-6 12 10)" />
    <path d="M3 14l19-2 1 19-19 2z" fill="#f2d659" stroke="#222" strokeWidth="1.6" />
    <circle cx="13" cy="21" r="2.4" fill="#222" />
    <path d="M12 22h3l1 5h-3z" fill="#222" />
  </Ic>
);
const OpenEye = () => (
  <Ic w={34} h={36}>
    <path d="M1 22c4-7 10-10 16-10s12 3 16 10c-4 7-10 12-16 12S5 29 1 22z" fill="#f2f2f2" stroke="#000" strokeWidth="2.4" />
    <circle cx="17" cy="22" r="7" fill="#333" />
    <circle cx="14.500" cy="19.500" r="2" fill="#ddd" />
    <path d="M7 13L4 4M13 10L11 1M21 10l2-9M27 13l3-9" stroke="#000" strokeWidth="2.2" />
  </Ic>
);
const ClosedEye = () => (
  <svg width="32" height="26" viewBox="0 0 32 26" fill="none">
    <path d="M3 11C6 4 11 1 16 1s10 3 13 10c-4 4-8 5-13 5S7 15 3 11z" fill="url(#gEye)" />
    <path d="M5 8C8 3 12 1 16 1c3 0 5 1 7 2M26 4l4 4-2 4M4 7l-3 4 3 3" stroke="#000" strokeWidth="2.200" />
    <path d="M4 12c4 3 8 4 12 4s8-1 12-4M16 15v10M10 15l-3 8M22 15l3 8M5 13L2 18M27 13l3 5" stroke="#000" strokeWidth="2.400" />
  </svg>
);
const DocMark = ({ c }) => (
  <svg width="24" height="30" viewBox="0 0 24 30" fill="none">
    <path d="M2 2h13l7 8v18H2z" fill="#fff" stroke={c} strokeWidth="3.6" />
    <path d="M14.500 2v8h7.500" stroke={c} strokeWidth="1.8" />
  </svg>
);
const PathMark = () => (
  <svg width="28" height="28" viewBox="0 0 28 28" fill="none">
    <path d="M4 8c3 2 1 6 0 14M5 15C7 8 14 4 20 4" stroke="#f6306a" strokeWidth="2" />
    <circle cx="4" cy="4.500" r="3" stroke="#f6306a" strokeWidth="2" />
    <rect x="1" y="21" width="6" height="6" stroke="#f6306a" strokeWidth="2" />
    <rect x="20" y="1" width="6" height="7" stroke="#f6306a" strokeWidth="2" />
  </svg>
);
const LayersAddGold = () => (
  <Ic w={34} h={30}>
    <path d="M6 10l26 0 3 14H10z" fill="#fff" stroke="#222" strokeWidth="1.6" />
    <path d="M2 3h22l9 13H8z" fill="url(#gGold)" stroke="#222" strokeWidth="1.6" />
  </Ic>
);
const LayerPlusIcon = () => (
  <Ic w={34} h={34}>
    <path d="M7 0v12M0 6h13" stroke="#000" strokeWidth="4.5" />
    <path d="M4 23h24l5 10H10z" fill="#ddd" stroke="#777" strokeWidth="1.4" />
    <path d="M2 15h20l9 12H8z" fill="url(#gDoc)" stroke="#222" strokeWidth="1.6" />
  </Ic>
);
const CloseCircle = () => (
  <Ic w={28} h={28}>
    <circle cx="14" cy="14" r="14" fill={INK} />
    <path d="M9 9l10 10M19 9L9 19" stroke="#fff" strokeWidth="3.6" />
  </Ic>
);
const WheelIcon = () => (
  <Ic w={28} h={32}>
    <path d="M3 1c10 4 19 14 23 20L7 31C3 22 2 10 3 1z" fill="url(#gWheelV)" stroke="#000" strokeWidth="1.4" />
    <path d="M3 1c10 4 19 14 23 20L7 31C3 22 2 10 3 1z" fill="url(#gWheelH)" />
  </Ic>
);

/* menu icons */
const OrderIcon = ({ kind }) => {
  const dark = "#2a2a2a";
  return (
    <svg width="32" height="32" viewBox="0 0 32 32" fill="none">
      {kind === "top" && (
        <>
          <path d="M0 1h32v5H0z" fill="#b8d4ee" stroke="#222" strokeWidth="1.4" />
          {[9, 16, 23, 29].map((y) => (
            <rect key={y} x="0" y={y} width="14" height="3.500" rx="1" fill={dark} />
          ))}
          <path d="M27 31V9M22 15l5-6 5 6" stroke="#000" strokeWidth="2" />
        </>
      )}
      {kind === "raise" && (
        <>
          <rect x="0" y="0" width="14" height="3.400" fill={dark} />
          <path d="M0 6h32v4H0z" fill="#b8d4ee" stroke="#222" strokeWidth="1.2" />
          <rect x="0" y="13" width="22" height="3.400" fill={dark} />
          <rect x="0" y="20" width="18" height="3.400" fill={dark} />
          <rect x="0" y="26" width="14" height="3.400" fill={dark} />
          <path d="M27 23v-7M24 18l3-4 3 4" stroke="#000" strokeWidth="2" />
        </>
      )}
      {kind === "lower" && (
        <>
          <rect x="18" y="0" width="14" height="3.400" fill={dark} />
          <rect x="14" y="6" width="18" height="3.400" fill={dark} />
          <rect x="14" y="12" width="18" height="3.400" fill={dark} />
          <path d="M0 18h32v4H0z" fill="#ffd65a" stroke="#222" strokeWidth="1.200" />
          <rect x="18" y="26" width="14" height="3.400" fill={dark} />
          <path d="M6 4v8M2 10l4 4 4-4" stroke="#000" strokeWidth="2" />
        </>
      )}
      {kind === "bottom" && (
        <>
          <rect x="18" y="0" width="14" height="3.400" fill={dark} />
          <rect x="18" y="7" width="14" height="3.400" fill={dark} />
          <rect x="18" y="13" width="14" height="3.400" fill={dark} />
          <rect x="18" y="19" width="14" height="3.400" fill={dark} />
          <path d="M0 25h32v5H0z" fill="#ffd65a" stroke="#222" strokeWidth="1.400" />
          <path d="M7 0v22M2 16l5 6 5-6" stroke="#000" strokeWidth="2" />
        </>
      )}
    </svg>
  );
};
const RotateIcon = ({ ccw }) => (
  <svg width="32" height="26" viewBox="0 0 32 26" fill="none">
    <g transform={ccw ? "translate(32 0) scale(-1 1)" : undefined}>
      <path d="M3 24C0 10 12 2 20 4c3 1 6 4 7 9" stroke="#000" strokeWidth="4" />
      <path d="M19 13h13l-6 9z" fill="#000" />
    </g>
  </svg>
);
const FlipHIcon = () => (
  <svg width="32" height="24" viewBox="0 0 32 24" fill="none">
    <path d="M3 12h26M11 3l-9 9 9 9M21 3l9 9-9 9" stroke="#000" strokeWidth="3.4" />
  </svg>
);
const FlipVIcon = () => (
  <svg width="32" height="34" viewBox="0 0 32 34" fill="none">
    <path d="M16 3v28M7 11l9-9 9 9M7 23l9 9 9-9" stroke="#000" strokeWidth="3.4" />
  </svg>
);
const KeyArrow = ({ kind, c }) => (
  <svg width="22" height="24" viewBox="0 0 22 24" fill="none" stroke={c} strokeWidth="2.6">
    {kind === "top" && <path d="M11 23V6M4 12l7-7 7 7M2 2h18" />}
    {kind === "up" && <path d="M11 23V3M4 10l7-7 7 7" />}
    {kind === "down" && <path d="M11 1v20M4 14l7 7 7-7" />}
    {kind === "bottom" && <path d="M11 1v16M4 11l7 7 7-7M2 22h18" />}
  </svg>
);
const ShiftKey = () => (
  <svg width="21" height="20" viewBox="0 0 21 20" fill="none">
    <path d="M10.500 1.500L1.500 10.500H6V18.500H15V10.500H19.500z" stroke="currentColor" strokeWidth="2.200" strokeLinejoin="round" />
  </svg>
);
const SubArrow = () => (
  <svg width="12" height="20" viewBox="0 0 12 20" fill="none" style={{ marginRight: 1 }}>
    <path d="M2 2l8 8-8 8" stroke="#222" strokeWidth="2.6" />
  </svg>
);

const TopRuler = () => {
  const ticks = [];
  const ox = 422.5 - 114;
  const step = 45.667;
  for (let k = -6; k <= 37; k++) {
    const x = ox + k * step;
    if (x < 0 || x > 1995) continue;
    const n = ((k % 10) + 10) % 10;
    const top = n === 0 ? 0 : n === 5 ? 24 : 36;
    ticks.push(<line key={k} x1={x} x2={x} y1={top} y2="51" stroke="#888" strokeWidth="2" />);
  }
  return (
    <RulerSvg width="1995" height="51">
      {ticks}
      <rect x="0" y="49" width="1995" height="3" fill="#888" />
      {[0, 1, 2, 3].map((v) => (
        <text key={v} x={ox + v * 456.67 + 8} y="19" fontSize="20" fill="#888" fontFamily="'Liberation Sans', sans-serif">
          {v}
        </text>
      ))}
      <path d="M1560 41h18l-9 9z" fill="#888" />
    </RulerSvg>
  );
};

const LeftRuler = () => {
  const ticks = [];
  const oy = 295 - 275;
  const step = 45.667;
  for (let k = 0; k <= 30; k++) {
    const y = oy + k * step;
    const n = k % 10;
    const left = n === 0 ? 4 : n === 5 ? 24 : 34;
    ticks.push(<line key={k} y1={y} y2={y} x1={left} x2="48" stroke="#888" strokeWidth="2" />);
  }
  return (
    <RulerSvg width="48" height="1411">
      {ticks}
      <rect x="45" y="0" width="3" height="1411" fill="#7c868c" />
      {[0, 1, 2, 3].map((v) => (
        <text key={v} x="23" y={oy + v * 456.67 + 18} fontSize="19" textAnchor="middle" fill="#888" fontFamily="'DejaVu Sans', sans-serif">
          {v}
        </text>
      ))}
      <path d="M38 25l9 10-9 10z" fill="#888" />
    </RulerSvg>
  );
};

const LEFT_TOOLS = [
  { h: 64.3, tools: [<SelectTool key="a" />, <NodeTool key="b" />, <RectTool key="c" />, <EllipseTool key="d" />, <StarTool key="e" />, <BoxTool key="f" />, <SpiralTool key="g" />] },
  { h: 63.7, tools: [<PenTool key="a" />, <PencilTool key="b" />, <CalligraphyTool key="c" />, <TextTool key="d" />] },
  { h: 64.3, tools: [<GradientTool key="a" />, <MeshTool key="b" />, <DropperTool key="c" />, <BucketTool key="d" />] },
  { h: 63.7, tools: [<TweakTool key="a" />, <SprayTool key="b" />, <EraserTool key="c" />, <ConnectorTool key="d" />] },
  { h: 63.5, tools: [<MeasureTool key="a" />, <ZoomTool key="b" />, <PagesTool key="c" />] },
];

const BLUE = "#669fd2";
const GREEN = "#5cb800";
const RED = "#f6306a";

const LAYERS = [
  { name: "F.SilkS", c: RED, open: true, bg: "#90c2f5" },
  { name: "path30216", c: RED, child: true },
  { name: "path28764", c: RED, child: true, bg: "#0081e8" },
  { name: "GND Symbol (BW dark)", c: BLUE },
  { name: "GND Symbol (BW light)", c: BLUE, hidden: true },
  { name: "GND Symbol", c: GREEN, hidden: true },
  { name: "C (BW dark)", c: BLUE, hidden: true },
  { name: "C (BW light)", c: BLUE, hidden: true },
  { name: "C", c: RED, hidden: true },
  { name: "Square Background (BW dark)", c: BLUE, hidden: true },
  { name: "Square Background (BW light)", c: BLUE, hidden: true },
  { name: "Square Background", c: GREEN, hidden: true },
  { name: "Round Background (BW dark)", c: BLUE, hidden: true },
  { name: "Round Background (BW light)", c: BLUE, hidden: true },
  { name: "Round Background", c: GREEN, hidden: true },
];

const PALETTE = [
  "#000000", "#1a1a1a", "#333333", "#4d4d4d", "#666666", "#808080", "#999999", "#b3b3b3", "#cccccc", "#e6e6e6", "#ececec", "#f2f2f2", "#f9f9f9", "#ffffff",
  "#800000", "#ff0000", "#808000", "#ffff00", "#008000", "#00ff00", "#008080", "#00ffff", "#000080", "#0000ff", "#800080", "#ff00ff",
  "#2b0000", "#5c0000", "#8b0000", "#bb0000", "#e80000", "#ff0000", "#ff0014", "#ff3d4a", "#ff7a80", "#ffa3a8", "#ffd0d3",
  "#2d0709", "#580d12", "#811620", "#ab1e2a", "#dd2531", "#e5565e", "#ed8085", "#f4abae", "#fad5d7",
  "#241c1c", "#4d3636", "#6f5353", "#976d6d", "#ae8f8f", "#c9b2b2", "#e3d9d9",
  "#2b1100", "#552200", "#893100", "#b63c00", "#e64900", "#ff5500", "#ff7600", "#ff9543", "#ffac70", "#ffc7a3", "#ffe2d0",
  "#2b1608", "#552a10", "#7e4218", "#aa5a1c", "#d46a22", "#de8856", "#e9a87e", "#f0c0a8", "#f8e2d4",
  "#241f1c", "#4b3c34", "#6c5d52", "#947c6c", "#ac9a8e", "#c9bdb5", "#e2ddd8",
  "#2b2200", "#544000",
];

const NODES = [
  [1212, 500], [1212, 775], [1212, 1187], [1450, 1187],
  [1383, 1323], [1040, 1323], [1315, 1461], [1108, 1461],
];

const MENU = [
  { t: "Layers and Objects...", k: ["s", "c", "L"] },
  { t: "Fill and Stroke...", k: ["s", "c", "F"] },
  { t: "Object Properties...", k: ["s", "c", "O"] },
  { t: "Symbols...", k: ["s", "c", "Y"] },
  { t: "Paint Servers..." },
  { t: "Selectors and CSS...", k: ["s", "c", "Q"] },
  null,
  { t: "Group", k: ["c", "G"] },
  { t: "Ungroup", k: ["s", "c", "G"] },
  { t: "Pop Selected Objects out of Group" },
  null,
  { t: "Clip", sub: true },
  { t: "Mask", sub: true },
  { t: "Pattern", sub: true },
  null,
  { t: "Objects to Marker" },
  { t: "Objects to Guides", k: ["s", "G"] },
  null,
  { t: "Raise to Top", icon: <OrderIcon kind="top" />, arrow: "top", active: true },
  { t: "Raise", icon: <OrderIcon kind="raise" />, arrow: "up" },
  { t: "Lower", icon: <OrderIcon kind="lower" />, arrow: "down" },
  { t: "Lower to Bottom", icon: <OrderIcon kind="bottom" />, arrow: "bottom" },
  null,
  { t: "Rotate 90° CW", icon: <RotateIcon />, k: ["c", "]"] },
  { t: "Rotate 90° CCW", icon: <RotateIcon ccw />, k: ["c", "["] },
  { t: "Flip Horizontal", icon: <FlipHIcon />, k: ["H"] },
  { t: "Flip Vertical", icon: <FlipVIcon />, k: ["V"] },
  null,
  { t: "Unhide All" },
  { t: "Unlock All" },
  null,
  { t: "Transform...", k: ["s", "c", "M"] },
  { t: "Align and Distribute...", k: ["s", "c", "A"] },
];

const MenuKeys = ({ item }) => {
  if (item.sub) return <SubArrow />;
  if (item.arrow) return <KeyArrow kind={item.arrow} c={item.active ? "#fff" : "rgba(0,0,0,.36)"} />;
  if (!item.k) return null;
  return (
    <Keys>
      {item.k.map((key) =>
        key === "s" ? (
          <KeyCap key={key} $w={28}><ShiftKey /></KeyCap>
        ) : key === "c" ? (
          <KeyCap key={key} $w={28}>⌘</KeyCap>
        ) : (
          <KeyLetter key={key}>{key}</KeyLetter>
        )
      )}
    </Keys>
  );
};

const SpinBox = ({ w, value, dim, align, pl, stepW, plusDim }) => {
  const c = dim ? "#e0dfdd" : "#3c4446";
  return (
    <Spin $w={w} $dim={dim}>
      <SpinValue $dim={dim} $align={align} $pl={pl}>{value}</SpinValue>
      <Stepper $w={stepW} $color={c} />
      <Stepper $w={stepW} $color={plusDim ? "#e0dfdd" : c} $plus />
    </Spin>
  );
};

const App = () => (
  <Window>
    <GlobalStyle />
    <Defs />
    <TitleBar>
      <Light $color="#ff5f57" $edge="#e5483f" />
      <Light $color="#febc2e" $edge="#dfa023" />
      <Light $color="#28c840" $edge="#1fae2f" />
      <TitleText>*cgnd_logo_3x3mm.svg - Inkscape</TitleText>
    </TitleBar>

    <Toolbar $h={83} $pl={8}>
      <ToolBtn><NewIcon /></ToolBtn>
      <ToolBtn><OpenIcon /></ToolBtn>
      <ToolBtn><SaveIcon /></ToolBtn>
      <ToolBtn><PrintIcon /></ToolBtn>
      <SepBlock $w={26} />
      <ToolBtn><ImportIcon /></ToolBtn>
      <ToolBtn><ExportIcon /></ToolBtn>
      <SepBlock />
      <ToolBtn><UndoIcon /></ToolBtn>
      <Gap $w={650} />
      <SepBlock $w={27} />
      <ToolBtn><DuplicateIcon /></ToolBtn>
      <ToolBtn><DuplicateIcon lock="gold" /></ToolBtn>
      <ToolBtn><DuplicateIcon lock="green" /></ToolBtn>
      <SepBlock $w={27} />
      <ToolBtn><ZoomSelIcon /></ToolBtn>
      <ToolBtn><ZoomSelIcon gold /></ToolBtn>
      <SepBlock />
      <ToolBtn><BrushIcon /></ToolBtn>
      <ToolBtn><BigTIcon /></ToolBtn>
      <ToolBtn><LayersIcon /></ToolBtn>
      <ToolBtn><XmlIcon /></ToolBtn>
      <ToolBtn><XmlIcon braces /></ToolBtn>
      <ToolBtn><AlignIcon /></ToolBtn>
      <SepBlock />
      <ToolBtn><PrefsDocIcon /></ToolBtn>
      <ToolBtn><ToolsIcon /></ToolBtn>
      <Push />
      <ToolBtn $w={70} $on><SnapIcon /></ToolBtn>
      <RaisedBtn $w={71}><Tri /></RaisedBtn>
    </Toolbar>

    <Toolbar $h={84} $pl={7}>
      <ToolBtn $w={73}><AddNodeIcon /></ToolBtn>
      <ToolBtn $w={73}><Tri dir="down" w={24} h={13} /></ToolBtn>
      <ToolBtn $w={74}><AddNodeIcon minus /></ToolBtn>
      <SepBlock $w={27} />
      <ToolBtn><JoinIcon kind="join" /></ToolBtn>
      <ToolBtn><JoinIcon kind="break" /></ToolBtn>
      <SepBlock />
      <ToolBtn><JoinIcon kind="seg" /></ToolBtn>
      <ToolBtn><JoinIcon kind="del" /></ToolBtn>
      <SepBlock />
      <Gap $w={576} />
      <ToolBtn><NodeClusterIcon /></ToolBtn>
      <SepBlock $w={26} />
      <SpinLabel $w={37} $dim>X:</SpinLabel>
      <SpinBox w={236} value="0.000" dim pl={12} />
      <SpinLabel $w={44} $dim>Y:</SpinLabel>
      <SpinBox w={236} value="0.000" dim pl={12} />
      <UnitBtn>mm <Tri dir="down" w={24} h={13} /></UnitBtn>
      <SepBlock $w={30} />
      <ToolBtn><HandleIcon green /></ToolBtn>
      <ToolBtn><HandleIcon /></ToolBtn>
      <ToolBtn $w={75}><PatternIcon /></ToolBtn>
      <SepBlock $w={27} />
      <ToolBtn $w={73}><ExpandIcon /></ToolBtn>
      <ToolBtn $w={70} $on><CuspHandleIcon /></ToolBtn>
      <ToolBtn $w={75}><OutlineIcon /></ToolBtn>
    </Toolbar>

    <Workspace>
      <ToolColumn>
        {LEFT_TOOLS.map((group, i) => (
          <React.Fragment key={i}>
            {i > 0 && <ToolSep />}
            {group.tools.map((icon, j) => (
              <ToolItem key={j} $h={group.h} $on={i === 0 && j === 1}>{icon}</ToolItem>
            ))}
          </React.Fragment>
        ))}
      </ToolColumn>

      <CanvasArea>
        <LockBtn><Padlock /></LockBtn>
        <TopRuler />
        <DeskBtn><svg width="26" height="30"><rect x="2" y="1" width="22" height="28" rx="7" fill="#2e3436" /><path d="M10 9l6-3v18h-4V11l-3 1z" fill="#fff" /></svg></DeskBtn>
        <LeftRuler />
        <Canvas>
          <Page />
          <Grid />
          <PageDim />
          <Selection width="756" height="1034" viewBox="0 0 756 1034">
            <rect x="1" y="1" width="752" height="1028" fill="none" stroke="#a8a8a8" strokeWidth="2" />
            <rect x="1" y="1" width="752" height="1028" fill="none" stroke="#0000a8" strokeWidth="2" strokeDasharray="14 14" />
          </Selection>
          {NODES.map(([x, y]) => (
            <Node key={x + "-" + y} $x={x} $y={y} />
          ))}
        </Canvas>
        <VScrollTrack><VThumb /></VScrollTrack>
        <RulerFoot />
        <HScrollTrack><HThumb /></HScrollTrack>
        <DeskBtn><WheelIcon /></DeskBtn>
      </CanvasArea>

      <Handle>
        <HandleDot />
        <HandleDot />
        <HandleDot />
      </Handle>

      <Panel>
        <TabBar>
          <ActiveTab>
            <LayersIcon />
            <TabLabel>Layers and Objects</TabLabel>
            <TabClose>
              <svg width="18" height="20" viewBox="0 0 18 20"><path d="M2 3l14 14M16 3L2 17" stroke="#8a8a8a" strokeWidth="4" /></svg>
            </TabClose>
          </ActiveTab>
          <TabIcon $ml={57}><BrushIcon /></TabIcon>
          <TabIcon $ml={93}><ExportIcon /></TabIcon>
          <TabMenuBtn><Chev c="#8a8a88" w={30} h={24} /></TabMenuBtn>
        </TabBar>
        <PanelBar>
          <LayersAddGold />
          <LayerPlusIcon />
          <PanelActions>
            <Chev up />
            <Chev />
            <CloseCircle />
          </PanelActions>
        </PanelBar>
        <LayerBox>
          {LAYERS.map((l) => (
            <LayerRow key={l.name}>
              <LayerMain $bg={l.bg}>
                {l.child ? (
                  <LayerIconWrap $w={28} $ml={85} $mr={16}><PathMark /></LayerIconWrap>
                ) : (
                  <>
                    <Expander>
                      {l.open ? <Tri dir="down" c="#555" w={22} h={17} /> : <Tri dir="right" c="#333" w={12} h={22} />}
                    </Expander>
                    <LayerIconWrap $w={24} $ml={12} $mr={16}><DocMark c={l.c} /></LayerIconWrap>
                  </>
                )}
                <LayerName>{l.name}</LayerName>
                {l.hidden && <ClosedEye />}
              </LayerMain>
              <LayerBar $color={l.c} />
            </LayerRow>
          ))}
        </LayerBox>
      </Panel>
    </Workspace>

    <PaletteRow>
      <Swatches>
        <NoSwatch>
          <svg width="33" height="32"><path d="M3 0l27 32M30 0L3 32" stroke="#8c1f1f" strokeWidth="3" /></svg>
        </NoSwatch>
        {PALETTE.map((c, i) => (
          <Swatch key={i} $c={c} />
        ))}
      </Swatches>
      <PaletteArrows>
        <Chev up w={28} h={20} />
        <Chev w={28} h={20} />
      </PaletteArrows>
      <MenuBtn>
        <MenuBar />
        <MenuBar />
        <MenuBar />
      </MenuBtn>
    </PaletteRow>

    <StatusBar>
      <FillGrid>
        <FillLabel>Fill:</FillLabel>
        <NoneText>None</NoneText>
        <FillLabel>Stroke:</FillLabel>
        <span />
        <StrokeSwatch />
        <span />
        <span>0.150</span>
      </FillGrid>
      <StatusOpacity>
        <SpinLabel $w={30}>O:</SpinLabel>
        <SpinBox w={142} value="100" align="flex-start" pl={11} plusDim />
      </StatusOpacity>
      <LayerTag>
        <LayerDot />
        F.SilkS
      </LayerTag>
      <LayerTag>
        <StatusIcon $ml={-11}><OpenEye /></StatusIcon>
        <StatusIcon $ml={42}><OpenLock /></StatusIcon>
      </LayerTag>
      <StatusSep $h={46} $mt={12} $ml={26} $mr={15} />
      <Hint>
        <b>Hold ALT</b> while hovering over item to highlight, <b>hold SHIFT</b> and click to hide/lock all.
      </Hint>
      <Push />
      <StatusSep $h={52} $mt={4} $ml={0} $mr={20} />
      <Coords>
        <span>X:</span>
        <CoordValue>3.25</CoordValue>
        <span>Y:</span>
        <CoordValue>0.03</CoordValue>
      </Coords>
      <StatusOpacity>
        <SpinLabel $w={22}>Z:</SpinLabel>
        <SpinBox w={186} value="6041%" pl={8} stepW={42} />
        <SpinLabel $w={46}>R:</SpinLabel>
        <SpinBox w={200} value="0.00°" align="center" stepW={42} />
      </StatusOpacity>
      <Gap $w={25} />
    </StatusBar>

    <Menu>
      {MENU.map((item, i) =>
        item === null ? (
          <MenuSep key={i} />
        ) : (
          <MenuRow key={item.t} $active={item.active}>
            {item.icon && <MenuIcon>{item.icon}</MenuIcon>}
            <MenuText>{item.t}</MenuText>
            <MenuKeys item={item} />
          </MenuRow>
        )
      )}
    </Menu>
    <Pointer width="30" height="44" viewBox="0 0 30 44">
      <path d="M3 2v33l8-7 6 13 7-3-6-13 10-1z" fill="#000" stroke="#fff" strokeWidth="2.4" />
    </Pointer>
  </Window>
);

export default App;
